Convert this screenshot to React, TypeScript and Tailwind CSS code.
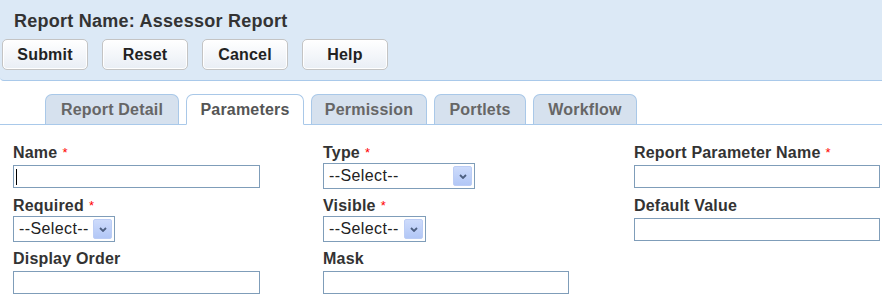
import React from "react";

const font = { fontFamily: '"Liberation Sans", Arial, sans-serif' };

function Btn({ label }: { label: string }) {
  return (
    <button className="w-[86px] h-[31px] rounded-[5px] border border-[#c4c4c4] bg-gradient-to-b from-[#ffffff] to-[#e9eef5] text-[16px] font-bold text-[#222] tracking-[0.2px] shadow-[inset_0_0_0_1px_#ffffff]">
      {label}
    </button>
  );
}

function Tab({ label, w, active }: { label: string; w: number; active?: boolean }) {
  return (
    <div
      style={{ width: w }}
      className={
        "h-[30px] rounded-t-[7px] border border-[#a9c8e8] flex items-center justify-center text-[16px] font-bold tracking-[0.2px] pt-[1px] " +
        (active
          ? "bg-white border-b-white text-[#555] relative top-[1px] h-[31px]"
          : "bg-[#d6e1ee] border-b-0 text-[#666]")
      }
    >
      {label}
    </div>
  );
}

function Label({ text, req }: { text: string; req?: boolean }) {
  return (
    <div className="h-[20px] leading-[20px] text-[16px] font-bold text-[#333] whitespace-nowrap tracking-[0.2px]">
      {text}
      {req && <span className="text-[#ff0000] text-[13px] align-top ml-[5px] font-normal">*</span>}
    </div>
  );
}

function Input({ w, cursor }: { w: number; cursor?: boolean }) {
  return (
    <div style={{ width: w }} className="h-[23px] border border-[#7f9db9] bg-white relative">
      {cursor && <span className="absolute left-[2px] top-[3px] w-[1px] h-[16px] bg-black" />}
    </div>
  );
}

function Select({ w }: { w: number }) {
  return (
    <div style={{ width: w }} className="h-[26px] border border-[#7f9db9] bg-white flex items-center justify-between pl-[5px] pr-[2px]">
      <span className="text-[16px] text-[#222] tracking-[0.4px]">--Select--</span>
      <span className="w-[19px] h-[20px] rounded-[2px] border border-[#bccdf5] bg-gradient-to-b from-[#cddbfb] to-[#b2c7f6] flex items-center justify-center">
        <svg width="8" height="5" viewBox="0 0 8 5">
          <path d="M1 1 L4 4 L7 1" stroke="#4d5f80" strokeWidth="1.8" fill="none" />
        </svg>
      </span>
    </div>
  );
}

export default function App() {
  return (
    <div style={font} className="w-[882px] h-[298px] bg-white overflow-hidden">
      <div className="h-[81px] bg-[#dce9f6] border-b border-[#a9c9ea] rounded-bl-[4px] pt-[9px]">
        <div className="pl-[14px] text-[18px] leading-[24px] font-bold text-[#333] tracking-[0.25px]">Report Name: Assessor Report</div>
        <div className="flex gap-[14px] pl-[2px] mt-[6px]">
          <Btn label="Submit" />
          <Btn label="Reset" />
          <Btn label="Cancel" />
          <Btn label="Help" />
        </div>
      </div>
      <div className="mt-[14px] h-[30px] border-b border-[#a9c9ea] flex items-end gap-[7px] pl-[45px]">
        <Tab label="Report Detail" w={134} />
        <Tab label="Parameters" w={118} active />
        <Tab label="Permission" w={116} />
        <Tab label="Portlets" w={92} />
        <Tab label="Workflow" w={104} />
      </div>
      <div className="grid grid-cols-[310px_311px_1fr] gap-y-[7px] pl-[13px] pt-[18px]">
        <div>
          <Label text="Name" req />
          <div className="h-[26px] flex items-center"><Input w={247} cursor /></div>
        </div>
        <div>
          <Label text="Type" req />
          <div className="h-[26px] flex items-center"><Select w={152} /></div>
        </div>
        <div>
          <Label text="Report Parameter Name" req />
          <div className="h-[26px] flex items-center"><Input w={246} /></div>
        </div>
        <div>
          <Label text="Required" req />
          <div className="h-[26px] flex items-center"><Select w={102} /></div>
        </div>
        <div>
          <Label text="Visible" req />
          <div className="h-[26px] flex items-center"><Select w={103} /></div>
        </div>
        <div>
          <Label text="Default Value" />
          <div className="h-[26px] flex items-center"><Input w={246} /></div>
        </div>
        <div>
          <Label text="Display Order" />
          <div className="h-[26px] flex items-center"><Input w={247} /></div>
        </div>
        <div>
          <Label text="Mask" />
          <div className="h-[26px] flex items-center"><Input w={246} /></div>
        </div>
        <div />
      </div>
    </div>
  );
}
